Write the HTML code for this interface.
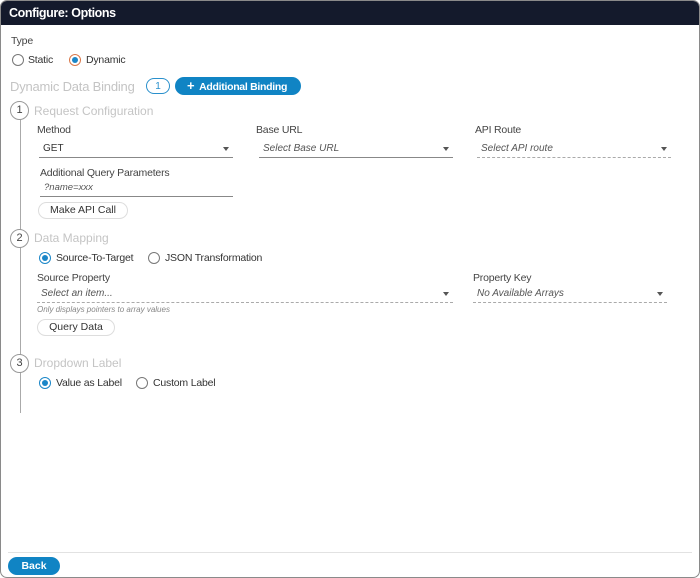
<!DOCTYPE html>
<html><head><style>
*{box-sizing:border-box;margin:0;padding:0}
body{width:700px;height:578px;background:#fff;font-family:"Liberation Sans",sans-serif;overflow:hidden;position:relative}
.frame{position:absolute;left:0;top:0;width:700px;height:578px;border:1.5px solid #8a8a8a;border-radius:7px;overflow:hidden;background:#fff}
.hdr{position:absolute;left:0;top:0;width:100%;height:24px;background:#141a2c;color:#fff;font-weight:bold;font-size:12.5px;line-height:24px;padding-left:8px;letter-spacing:-0.4px}
.a{position:absolute;white-space:nowrap}
.lbl{font-size:10.5px;color:#444;letter-spacing:-0.2px}
.t{font-size:10.5px;color:#333;letter-spacing:-0.2px}
.hd{font-size:13px;color:#c4c4c4}
.radio{position:absolute;width:12px;height:12px;border:1px solid #777;border-radius:50%;background:#fff}
.radio.on{border-color:#1a86c8}
.radio.on::after{content:"";position:absolute;left:2px;top:2px;width:6px;height:6px;border-radius:50%;background:#1a86c8}
.radio.or{border-color:#d9784a}
.circ{position:absolute;width:19px;height:19px;border:1px solid #999;border-radius:50%;background:#fff;font-size:11px;color:#444;text-align:center;line-height:17px}
.sel{position:absolute;height:17px;border-bottom:1px solid #888;font-size:10px;color:#333;padding-left:4px;line-height:15px}
.sel.dot{border-bottom:1px dashed #aaa}
.sel i{color:#555}
.caret{position:absolute;right:4px;top:6px;width:0;height:0;border-left:3.5px solid transparent;border-right:3.5px solid transparent;border-top:4px solid #555}
.btn{position:absolute;height:17px;border:1px solid #ddd;border-radius:9px;font-size:10.5px;color:#333;text-align:center;line-height:15px}
</style></head><body>
<div class="frame">
<div class="hdr">Configure: Options</div>
<div class="a lbl" style="left:10px;top:34px">Type</div>
<div class="radio" style="left:11px;top:53px"></div><div class="a t" style="left:27px;top:53px">Static</div>
<div class="radio on or" style="left:68px;top:53px"></div><div class="a t" style="left:85px;top:53px">Dynamic</div>
<div class="a hd" style="left:9px;top:78px;letter-spacing:-0.2px">Dynamic Data Binding</div>
<div class="a" style="left:145px;top:77px;width:24px;height:16px;border:1px solid #2a90cc;border-radius:9px;font-size:10px;color:#2a90cc;text-align:center;line-height:15px">1</div>
<div class="a" style="left:174px;top:76px;width:126px;height:18px;background:#1084c4;border-radius:9px;color:#fff;font-size:10.5px;font-weight:bold;line-height:18px;padding-left:12px;letter-spacing:-0.3px"><b style="font-size:13px">+</b>&nbsp; Additional Binding</div>
<div class="a" style="left:19px;top:110px;width:1px;height:302px;background:#aaa"></div>
<div class="circ" style="left:9px;top:100px">1</div>
<div class="a hd" style="left:33px;top:103px;font-size:12px">Request Configuration</div>
<div class="a lbl" style="left:36px;top:123px">Method</div>
<div class="sel" style="left:38px;top:140px;width:194px">GET<span class="caret"></span></div>
<div class="a lbl" style="left:255px;top:123px">Base URL</div>
<div class="sel" style="left:258px;top:140px;width:194px"><i>Select Base URL</i><span class="caret"></span></div>
<div class="a lbl" style="left:474px;top:123px">API Route</div>
<div class="sel dot" style="left:476px;top:140px;width:194px"><i>Select API route</i><span class="caret"></span></div>
<div class="a lbl" style="left:39px;top:166px">Additional Query Parameters</div>
<div class="sel" style="left:39px;top:179px;width:193px;font-size:9.5px"><i>?name=xxx</i></div>
<div class="btn" style="left:37px;top:201px;width:90px">Make API Call</div>
<div class="circ" style="left:9px;top:228px">2</div>
<div class="a hd" style="left:33px;top:230px;font-size:12px">Data Mapping</div>
<div class="radio on" style="left:38px;top:251px"></div><div class="a t" style="left:55px;top:251px">Source-To-Target</div>
<div class="radio" style="left:147px;top:251px"></div><div class="a t" style="left:164px;top:251px">JSON Transformation</div>
<div class="a lbl" style="left:36px;top:271px">Source Property</div>
<div class="sel dot" style="left:36px;top:285px;width:416px"><i>Select an item...</i><span class="caret"></span></div>
<div class="a" style="left:36px;top:304px;font-size:8px;color:#888;font-style:italic">Only displays pointers to array values</div>
<div class="btn" style="left:36px;top:318px;width:78px">Query Data</div>
<div class="a lbl" style="left:472px;top:271px">Property Key</div>
<div class="sel dot" style="left:472px;top:285px;width:194px"><i>No Available Arrays</i><span class="caret"></span></div>
<div class="circ" style="left:9px;top:353px">3</div>
<div class="a hd" style="left:33px;top:355px;font-size:12px">Dropdown Label</div>
<div class="radio on" style="left:38px;top:376px"></div><div class="a t" style="left:55px;top:376px">Value as Label</div>
<div class="radio" style="left:135px;top:376px"></div><div class="a t" style="left:152px;top:376px">Custom Label</div>
<div class="a" style="left:7px;top:551px;width:684px;height:1px;background:#e2e2e2"></div>
<div class="a" style="left:7px;top:556px;width:52px;height:18px;background:#1084c4;border-radius:9px;color:#fff;font-size:10.5px;font-weight:bold;text-align:center;line-height:18px">Back</div>
</div>
</body></html>
